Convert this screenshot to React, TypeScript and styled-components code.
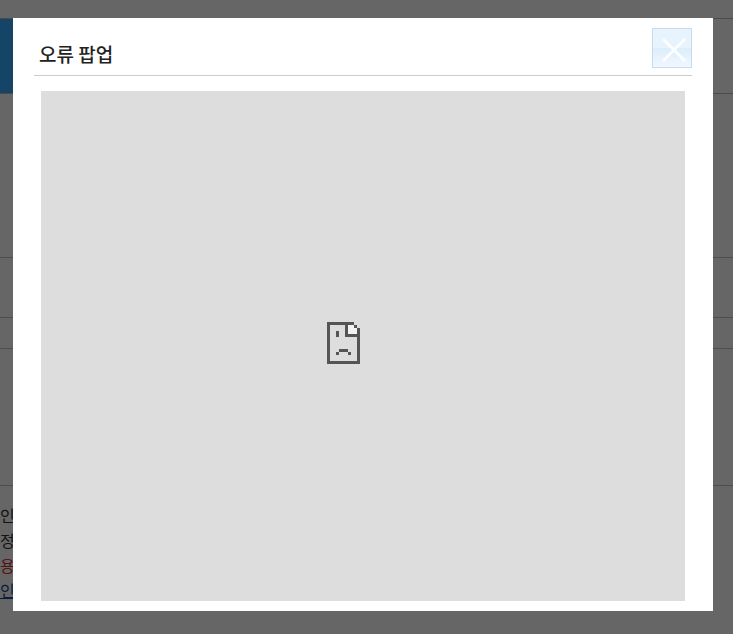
import React from 'react'
import styled, { createGlobalStyle } from 'styled-components'

const GlobalStyle = createGlobalStyle`
  html, body {
    margin: 0;
    padding: 0;
    background: #fff;
    font-family: "Noto Sans CJK KR", "Noto Sans", sans-serif;
  }
`

const App = () => {
  return (
    <>
      <GlobalStyle />
      <Page>
        <TopBar />
        <HeroBand />
        <Section $height={164} />
        <Section $height={60} />
        <Section $height={31} />
        <Section $height={137} />
        <Notices>
          <NoticeLine>인</NoticeLine>
          <NoticeLine>정</NoticeLine>
          <NoticeLine $tone="red">용</NoticeLine>
          <NoticeLine $tone="link">인</NoticeLine>
        </Notices>
      </Page>
      <Overlay />
      <Dialog>
        <DialogHeader>
          <DialogTitle>오류 팝업</DialogTitle>
          <CloseButton type="button" aria-label="닫기">
            <CloseIcon width="24" height="24" viewBox="0 0 24 24" fill="none">
              <path d="M1 1L23 23M23 1L1 23" stroke="#fff" strokeWidth="2.6" opacity="0.9" />
            </CloseIcon>
          </CloseButton>
        </DialogHeader>
        <FrameArea>
          <BrokenPageIcon width="33" height="42" viewBox="0 0 11 14" shapeRendering="crispEdges">
            <path fill="#f3f3f3" d="M7 1h2v1h1v2H7z" />
            <path
              fill="#555"
              fillRule="evenodd"
              d="M0 0h9v1h1v1h1v12H0V0zm1 1v12h9V5H6V1H1zm6 0v3h3V2H9V1H7z"
            />
            <path fill="#555" d="M3 3h1v2H3zM3 10h1v1H3zM4 9h3v1H4zM7 10h1v1H7z" />
          </BrokenPageIcon>
        </FrameArea>
      </Dialog>
    </>
  )
}
export default App

const Page = styled.div`
  width: 733px;
  height: 634px;
  overflow: hidden;
`

const TopBar = styled.div`
  height: 19px;
  border-bottom: 1px solid #bbb;
  box-sizing: border-box;
`

const HeroBand = styled.div`
  height: 75px;
  border-bottom: 1px solid #bbb;
  box-sizing: border-box;
  background: linear-gradient(to right, #32adff 0 13px, #fff 13px);
`

const Section = styled.div<{ $height: number }>`
  height: ${p => p.$height}px;
  border-bottom: 1px solid #c4c4c4;
  box-sizing: border-box;
`

const Notices = styled.div`
  padding-top: 17px;
  display: flex;
  flex-direction: column;
`

const NoticeLine = styled.div<{ $tone?: 'red' | 'link' }>`
  font-size: 16px;
  line-height: 25px;
  color: ${p => (p.$tone === 'red' ? '#c33' : p.$tone === 'link' ? '#1a4f9c' : '#333')};
  text-decoration: ${p => (p.$tone === 'link' ? 'underline' : 'none')};
`

const Overlay = styled.div`
  position: fixed;
  inset: 0;
  background: rgba(0, 0, 0, 0.6);
`

const Dialog = styled.div`
  position: fixed;
  left: 13px;
  top: 18px;
  width: 700px;
  height: 593px;
  box-sizing: border-box;
  background: #fff;
  padding: 10px 21px 10px;
  display: flex;
  flex-direction: column;
`

const DialogHeader = styled.div`
  height: 48px;
  box-sizing: border-box;
  border-bottom: 1px solid #ccc;
  display: flex;
  align-items: flex-start;
  justify-content: space-between;
`

const DialogTitle = styled.h2`
  margin: 13px 0 0 5px;
  font-size: 19px;
  line-height: 26px;
  font-weight: 500;
  color: #222;
`

const CloseButton = styled.button`
  width: 40px;
  height: 40px;
  padding: 0;
  box-sizing: border-box;
  border: 1px solid #c5dcef;
  background: linear-gradient(to bottom, #e8f4fd 0 50%, #dcedfb 50%, #f1f8fe 100%);
  display: flex;
  align-items: center;
  justify-content: center;
`

const CloseIcon = styled.svg`
  display: block;
  margin: 3px 0 0 3px;
`

const FrameArea = styled.div`
  margin: 15px 7px 0;
  flex: 1;
  background: #ddd;
  display: flex;
  align-items: center;
  justify-content: center;
`

const BrokenPageIcon = styled.svg`
  display: block;
  margin: 0 40px 7px 0;
`
